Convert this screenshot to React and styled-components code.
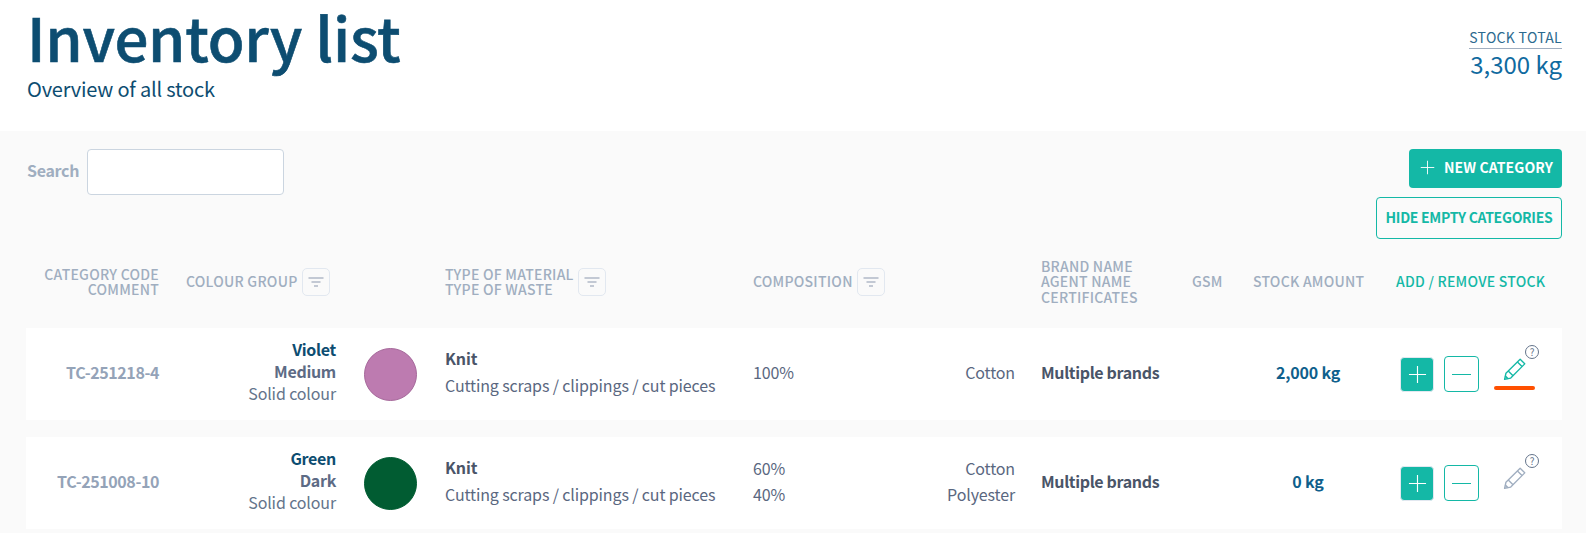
import React from "react";
import styled, { createGlobalStyle } from "styled-components";

const FONT = `"Noto Sans CJK SC", "Noto Sans", sans-serif`;
const TEAL = "#14b8a6";
const COLUMNS = "133px 177px 109px 308px 262px 177px 61px 110px 199px";

const rows = [
  {
    code: "TC-251218-4",
    colour: "Violet",
    shade: "Medium",
    pattern: "Solid colour",
    swatch: "#bd7bb0",
    ring: "#a5689a",
    percents: ["100%"],
    fibres: ["Cotton"],
    amount: "2,000 kg",
    active: true,
  },
  {
    code: "TC-251008-10",
    colour: "Green",
    shade: "Dark",
    pattern: "Solid colour",
    swatch: "#015c32",
    ring: "#015c32",
    percents: ["60%", "40%"],
    fibres: ["Cotton", "Polyester"],
    amount: "0 kg",
    active: false,
  },
];

const FilterIcon = () => (
  <svg width="16" height="10" viewBox="0 0 16 10" fill="none" stroke="#8b97ad" strokeWidth="1.2">
    <path d="M0.5 1h15M3.5 5h9M6 9h4" />
  </svg>
);

const PlusIcon = ({ size = 20 }) => (
  <svg width={size} height={size} viewBox="0 0 20 20" fill="none" stroke="currentColor" strokeWidth="1.2">
    <path d="M10 1v18M1 10h18" />
  </svg>
);

const PencilIcon = ({ color }) => (
  <svg width="23" height="23" viewBox="0 0 22 22" fill="none" stroke={color} strokeWidth="1.3" strokeLinejoin="round">
    <path d="M16.4 1.2l4.4 4.4L7.4 19.2l-5.9 1.3 1.3-5.9z" />
    <path d="M13.8 3.8l4.4 4.4M5 12.4l4.6 4.6" />
    <path d="M2.2 17.4l2.4 2.4" strokeWidth="1.6" />
  </svg>
);

const Help = () => (
  <HelpBadge>?</HelpBadge>
);

const App = () => {
  return (
    <>
      <GlobalStyle />
      <Header>
        <div>
          <Title>Inventory list</Title>
          <Subtitle>Overview of all stock</Subtitle>
        </div>
        <Total>
          <TotalLabel>STOCK TOTAL</TotalLabel>
          <TotalValue>3,300 kg</TotalValue>
        </Total>
      </Header>
      <Main>
        <Toolbar>
          <SearchBox>
            <SearchLabel htmlFor="search">Search</SearchLabel>
            <SearchInput id="search" />
          </SearchBox>
          <ToolbarActions>
            <PrimaryButton>
              <PlusIcon size={15} />
              NEW CATEGORY
            </PrimaryButton>
            <OutlineButton>HIDE EMPTY CATEGORIES</OutlineButton>
          </ToolbarActions>
        </Toolbar>

        <HeadRow>
          <HeadCell $right>
            CATEGORY CODE
            <br />
            COMMENT
          </HeadCell>
          <HeadCell $pad="27px">
            <HeadFilter>
              COLOUR GROUP
              <FilterButton>
                <FilterIcon />
              </FilterButton>
            </HeadFilter>
          </HeadCell>
          <span />
          <HeadCell>
            <HeadFilter>
              <span>
                TYPE OF MATERIAL
                <br />
                TYPE OF WASTE
              </span>
              <FilterButton>
                <FilterIcon />
              </FilterButton>
            </HeadFilter>
          </HeadCell>
          <HeadCell>
            <HeadFilter>
              COMPOSITION
              <FilterButton>
                <FilterIcon />
              </FilterButton>
            </HeadFilter>
          </HeadCell>
          <HeadCell $pad="26px">
            BRAND NAME
            <br />
            AGENT NAME
            <br />
            CERTIFICATES
          </HeadCell>
          <HeadCell>GSM</HeadCell>
          <HeadCell>STOCK AMOUNT</HeadCell>
          <HeadCell $teal $pad="33px">ADD / REMOVE STOCK</HeadCell>
        </HeadRow>

        {rows.map((row) => (
          <Row key={row.code}>
            <Code>{row.code}</Code>
            <ColourCell>
              <ColourName>{row.colour}</ColourName>
              <ShadeName>{row.shade}</ShadeName>
              <Pattern>{row.pattern}</Pattern>
            </ColourCell>
            <SwatchCell>
              <Swatch $fill={row.swatch} $ring={row.ring} />
            </SwatchCell>
            <TypeCell>
              <Material>Knit</Material>
              <Waste>Cutting scraps / clippings / cut pieces</Waste>
            </TypeCell>
            <CompositionCell>
              <div>
                {row.percents.map((p) => (
                  <CompLine key={p}>{p}</CompLine>
                ))}
              </div>
              <FibreList>
                {row.fibres.map((f) => (
                  <CompLine key={f}>{f}</CompLine>
                ))}
              </FibreList>
            </CompositionCell>
            <Brand>Multiple brands</Brand>
            <span />
            <Amount>{row.amount}</Amount>
            <Actions>
              <AddButton>
                <PlusIcon size={19} />
              </AddButton>
              <RemoveButton>
                <Dash />
              </RemoveButton>
              <EditButton $active={row.active}>
                <PencilIcon color={row.active ? TEAL : "#a0aec0"} />
                <Help />
              </EditButton>
            </Actions>
          </Row>
        ))}
      </Main>
    </>
  );
};

const GlobalStyle = createGlobalStyle`
  html, body {
    margin: 0;
    background: #fafafa;
    font-family: ${FONT};
    overflow: hidden;
  }
`;

const Header = styled.header`
  height: 131px;
  box-sizing: border-box;
  background: #fff;
  padding: 0 24px 0 27px;
  display: flex;
  justify-content: space-between;
`;

const Title = styled.h1`
  margin: 0 0 4px;
  font-size: 60px;
  line-height: 72px;
  font-weight: 500;
  letter-spacing: -0.3px;
  color: #0d4d71;
  -webkit-text-stroke: 0.6px #0d4d71;
`;

const Subtitle = styled.p`
  margin: 0;
  font-size: 20px;
  line-height: 26px;
  letter-spacing: -0.2px;
  color: #0d4d71;
`;

const Total = styled.div`
  margin-top: 27px;
  text-align: right;
`;

const TotalLabel = styled.div`
  font-size: 14px;
  line-height: 20px;
  letter-spacing: 0.3px;
  color: #2c6a8f;
  border-bottom: 1px solid #a0aec0;
  padding-bottom: 1px;
`;

const TotalValue = styled.div`
  font-size: 24px;
  line-height: 30px;
  color: #0f6a9f;
`;

const Main = styled.main`
  padding: 18px 24px 0 26px;
`;

const Toolbar = styled.div`
  display: flex;
  justify-content: space-between;
  align-items: flex-start;
`;

const SearchBox = styled.div`
  display: flex;
  align-items: center;
  gap: 8px;
`;

const SearchLabel = styled.label`
  font-size: 16px;
  font-weight: 600;
  letter-spacing: -0.3px;
  padding: 0 0 5px 1px;
  color: #a0aec0;
`;

const SearchInput = styled.input`
  width: 197px;
  height: 46px;
  box-sizing: border-box;
  background: #fff;
  border: 1px solid #cbd5e0;
  border-radius: 4px;
`;

const ToolbarActions = styled.div`
  display: flex;
  flex-direction: column;
  align-items: flex-end;
  gap: 9px;
`;

const PrimaryButton = styled.button`
  height: 39px;
  width: 153px;
  box-sizing: border-box;
  padding: 0 9px 3px 11px;
  display: flex;
  align-items: center;
  justify-content: space-between;
  background: ${TEAL};
  color: #fff;
  border: 0;
  border-radius: 4px;
  font-family: ${FONT};
  font-size: 14px;
  font-weight: 600;
  letter-spacing: 0.1px;
`;

const OutlineButton = styled.button`
  height: 42px;
  width: 186px;
  box-sizing: border-box;
  padding: 0 0 3px;
  background: transparent;
  color: ${TEAL};
  border: 1px solid ${TEAL};
  border-radius: 4px;
  font-family: ${FONT};
  font-size: 14px;
  font-weight: 600;
  letter-spacing: -0.3px;
`;

const HeadRow = styled.div`
  display: grid;
  grid-template-columns: ${COLUMNS};
  align-items: center;
  box-sizing: border-box;
  height: 89px;
  padding-bottom: 3px;
`;

const HeadCell = styled.div`
  font-size: 14px;
  line-height: 15.5px;
  font-weight: 500;
  letter-spacing: 0.25px;
  white-space: nowrap;
  color: ${(p) => (p.$teal ? TEAL : "#a0aec0")};
  text-align: ${(p) => (p.$right ? "right" : "left")};
  padding-left: ${(p) => p.$pad || 0};
`;

const HeadFilter = styled.div`
  display: flex;
  align-items: center;
  gap: 4px;
`;

const FilterButton = styled.button`
  width: 28px;
  height: 28px;
  padding: 0;
  display: flex;
  align-items: center;
  justify-content: center;
  background: #fafafa;
  border: 1px solid #e2e8f0;
  border-radius: 5px;
`;

const Row = styled.div`
  display: grid;
  grid-template-columns: ${COLUMNS};
  align-items: center;
  height: 92px;
  margin-bottom: 17px;
  background: #fff;
  font-size: 16px;
  letter-spacing: -0.13px;
  color: #4a5568;
`;

const TextCell = styled.div`
  padding-bottom: 4px;
`;

const Code = styled(TextCell)`
  text-align: right;
  font-weight: 600;
  letter-spacing: -0.4px;
  color: #94a3b8;
`;

const ColourCell = styled(TextCell)`
  text-align: right;
  line-height: 22px;
  padding-bottom: 7px;
`;

const ColourName = styled.div`
  font-weight: 600;
  letter-spacing: -0.3px;
  color: #0d4d71;
`;

const ShadeName = styled.div`
  font-weight: 600;
  letter-spacing: -0.3px;
  color: #5d6b85;
`;

const Pattern = styled.div`
  color: #64748b;
`;

const SwatchCell = styled.div`
  padding-left: 28px;
`;

const Swatch = styled.div`
  width: 53px;
  height: 53px;
  box-sizing: border-box;
  border-radius: 50%;
  background: ${(p) => p.$fill};
  border: 1px solid ${(p) => p.$ring};
`;

const TypeCell = styled(TextCell)`
  line-height: 27px;
`;

const Material = styled.div`
  font-weight: 600;
  color: #4a5568;
`;

const Waste = styled.div`
  color: #5a6780;
`;

const CompositionCell = styled(TextCell)`
  display: flex;
  justify-content: space-between;
  color: #5a6780;
`;

const FibreList = styled.div`
  text-align: right;
`;

const CompLine = styled.div`
  line-height: 26px;
`;

const Brand = styled(TextCell)`
  padding-left: 26px;
  font-weight: 600;
  letter-spacing: -0.35px;
  color: #4a5568;
`;

const Amount = styled(TextCell)`
  text-align: center;
  font-weight: 600;
  letter-spacing: -0.2px;
  color: #0f5f8c;
`;

const Actions = styled.div`
  display: flex;
  align-items: center;
  padding-left: 37px;
`;

const AddButton = styled.button`
  width: 34px;
  height: 35px;
  padding: 0;
  display: flex;
  align-items: center;
  justify-content: center;
  background: ${TEAL};
  color: #fff;
  border: 1px solid #e2e8f0;
  border-radius: 4px;
`;

const RemoveButton = styled.button`
  width: 35px;
  height: 36px;
  margin-left: 10px;
  padding: 0;
  display: flex;
  align-items: center;
  justify-content: center;
  background: #fff;
  border: 1px solid ${TEAL};
  border-radius: 4px;
`;

const Dash = styled.span`
  width: 19px;
  height: 1px;
  background: ${TEAL};
`;

const EditButton = styled.div`
  position: relative;
  width: 41px;
  height: 46px;
  margin-left: 15px;
  box-sizing: border-box;
  padding-top: 7px;
  display: flex;
  justify-content: center;
  &::after {
    content: "";
    display: ${(p) => (p.$active ? "block" : "none")};
    position: absolute;
    left: 0;
    right: 0;
    bottom: 7px;
    height: 4px;
    border-radius: 2px;
    background: #ff5000;
  }
`;

const HelpBadge = styled.span`
  position: absolute;
  top: -6px;
  right: -4px;
  width: 14px;
  height: 14px;
  box-sizing: border-box;
  border: 1px solid #64748b;
  border-radius: 50%;
  display: flex;
  align-items: center;
  justify-content: center;
  font-size: 10px;
  line-height: 1;
  color: #64748b;
`;

export default App;
